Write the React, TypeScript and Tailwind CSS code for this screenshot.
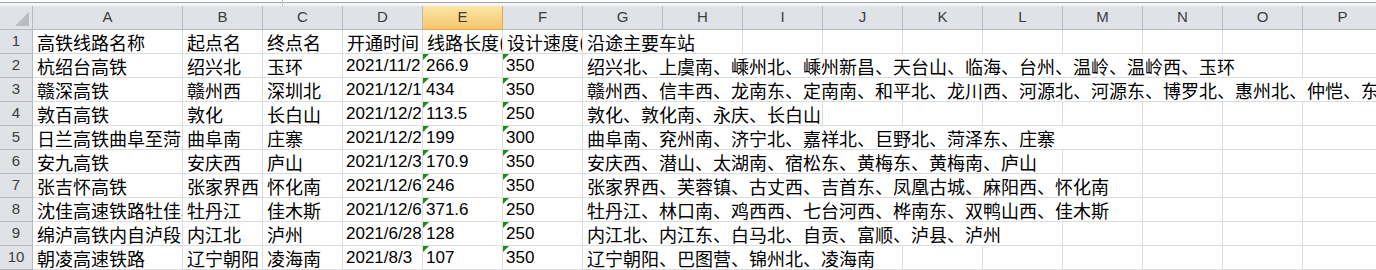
import React from "react";

const cjk = "font-['Noto_Sans_CJK_SC','Noto_Sans_CJK_JP',sans-serif] text-[18px]";
const latin = "font-['Liberation_Sans',Arial,sans-serif]";

const colLetters = ["A", "B", "C", "D", "E", "F", "G", "H", "I", "J", "K", "L", "M", "N", "O", "P"];

type Row = {
  a: string;
  b: string;
  c: string;
  d: string;
  e: string;
  f: string;
  g: string;
  span: number;
  header?: boolean;
};

const rows: Row[] = [
  { a: "高铁线路名称", b: "起点名", c: "终点名", d: "开通时间", e: "线路长度(km)", f: "设计速度(km/h)", g: "沿途主要车站", span: 2, header: true },
  { a: "杭绍台高铁", b: "绍兴北", c: "玉环", d: "2021/11/2", e: "266.9", f: "350", g: "绍兴北、上虞南、嵊州北、嵊州新昌、天台山、临海、台州、温岭、温岭西、玉环", span: 9 },
  { a: "赣深高铁", b: "赣州西", c: "深圳北", d: "2021/12/1", e: "434", f: "350", g: "赣州西、信丰西、龙南东、定南南、和平北、龙川西、河源北、河源东、博罗北、惠州北、仲恺、东莞南、光明城、深圳北", span: 10 },
  { a: "敦百高铁", b: "敦化", c: "长白山", d: "2021/12/2", e: "113.5", f: "250", g: "敦化、敦化南、永庆、长白山", span: 3 },
  { a: "日兰高铁曲阜至菏泽段", b: "曲阜南", c: "庄寨", d: "2021/12/2", e: "199", f: "300", g: "曲阜南、兖州南、济宁北、嘉祥北、巨野北、菏泽东、庄寨", span: 7 },
  { a: "安九高铁", b: "安庆西", c: "庐山", d: "2021/12/3", e: "170.9", f: "350", g: "安庆西、潜山、太湖南、宿松东、黄梅东、黄梅南、庐山", span: 6 },
  { a: "张吉怀高铁", b: "张家界西", c: "怀化南", d: "2021/12/6", e: "246", f: "350", g: "张家界西、芙蓉镇、古丈西、吉首东、凤凰古城、麻阳西、怀化南", span: 7 },
  { a: "沈佳高速铁路牡佳段", b: "牡丹江", c: "佳木斯", d: "2021/12/6", e: "371.6", f: "250", g: "牡丹江、林口南、鸡西西、七台河西、桦南东、双鸭山西、佳木斯", span: 7 },
  { a: "绵泸高铁内自泸段", b: "内江北", c: "泸州", d: "2021/6/28", e: "128", f: "250", g: "内江北、内江东、白马北、自贡、富顺、泸县、泸州", span: 6 },
  { a: "朝凌高速铁路", b: "辽宁朝阳", c: "凌海南", d: "2021/8/3", e: "107", f: "350", g: "辽宁朝阳、巴图营、锦州北、凌海南", span: 4 },
];

const spanClass: Record<number, string> = {
  2: "col-span-2",
  3: "col-span-3",
  4: "col-span-4",
  6: "col-span-6",
  7: "col-span-7",
  9: "col-span-9",
  10: "col-span-10",
};

const cell = "h-[24px] border-r border-b border-[#dadcdd] bg-white overflow-hidden whitespace-nowrap flex items-end";

function TextCell({ text, num, flag }: { text: string; num?: boolean; flag?: boolean }) {
  return (
    <div className={`${cell} relative ${num ? `${latin} text-[17px] pl-[3px] pb-[1px] leading-[20px]` : `${cjk} pl-[4px] leading-[22px]`} text-black`}>
      {flag && (
        <span className="absolute left-0 top-0 w-0 h-0 border-t-[6px] border-r-[6px] border-t-[#1a8c1a] border-r-transparent" />
      )}
      {text}
    </div>
  );
}

export default function App() {
  return (
    <div className="w-[1376px] h-[270px] overflow-hidden bg-white">
      {/* formula bar edge */}
      <div className="flex h-[6px]">
        <div className="w-[283px] border-r border-[#c5c9cf] flex flex-col">
          <div className="h-[2px] bg-white" />
          <div className="h-[1px] bg-[#a3a7ad]" />
          <div className="flex-1 bg-[#f2f4f6]" />
        </div>
        <div className="flex-1 flex flex-col">
          <div className="h-[2px] bg-white" />
          <div className="h-[1px] bg-[#a3a7ad]" />
          <div className="flex-1 bg-[#f2f4f6]" />
        </div>
      </div>

      <div className="grid grid-cols-[33px_150px_repeat(15,80px)]">
        {/* column headers */}
        <div className="h-[24px] bg-[#dfe3e8] border-r border-b border-[#b6bbc2] relative">
          <svg className="absolute right-[3px] bottom-[3px]" width="14" height="14" viewBox="0 0 14 14">
            <polygon points="14,0 14,14 0,14" fill="#b9bdc3" />
          </svg>
        </div>
        {colLetters.map((l) => (
          <div
            key={l}
            className={`h-[24px] border-r border-b flex items-center justify-center ${latin} text-[15px] ${
              l === "E"
                ? "bg-gradient-to-b from-[#fce6a6] to-[#f5c66c] border-[#f0a24a] text-[#3c3c3c]"
                : "bg-[#dfe3e8] border-[#b6bbc2] text-[#3c3c3c]"
            }`}
          >
            {l}
          </div>
        ))}

        {rows.map((r, i) => (
          <React.Fragment key={i}>
            <div className={`h-[24px] bg-[#dfe3e8] border-r border-b border-[#b6bbc2] flex items-center justify-center ${latin} text-[15px] text-[#3c3c3c]`}>
              {i + 1}
            </div>
            <TextCell text={r.a} />
            <TextCell text={r.b} />
            <TextCell text={r.c} />
            <TextCell text={r.d} num={!r.header} />
            <TextCell text={r.e} num={!r.header} flag={!r.header} />
            <TextCell text={r.f} num={!r.header} flag={!r.header} />
            <div className={spanClass[r.span]}>
              <TextCell text={r.g} />
            </div>
            {Array.from({ length: 10 - r.span }).map((_, k) => (
              <div key={k} className={cell} />
            ))}
          </React.Fragment>
        ))}
      </div>
    </div>
  );
}
